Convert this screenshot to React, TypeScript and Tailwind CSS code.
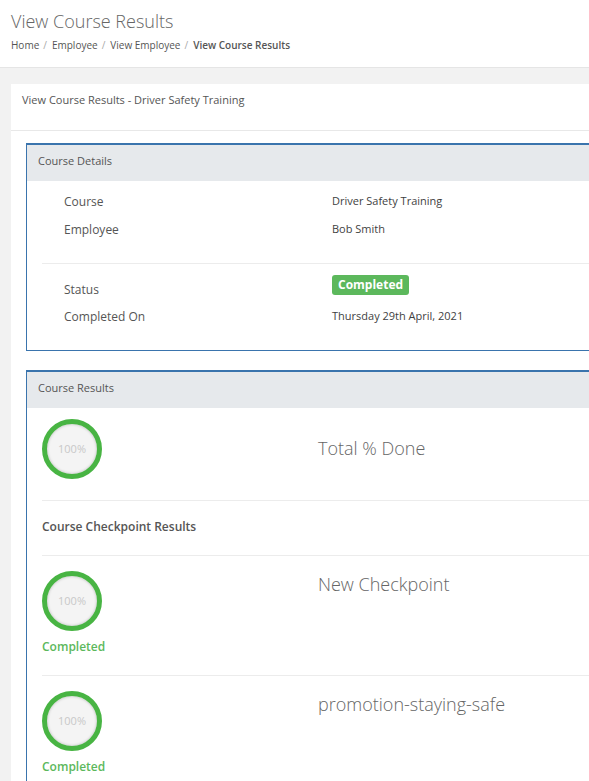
const font = { fontFamily: '"Open Sans", "Noto Sans", Arial, sans-serif' };

function Ring() {
  return (
    <div className="flex h-[60px] w-[60px] items-center justify-center rounded-full border-[5px] border-[#48b443] bg-[#f4f4f4] shadow-[inset_0_0_3px_rgba(0,0,0,0.25)]">
      <span className="text-[11px] text-[#c8c8c8]">100%</span>
    </div>
  );
}

function PanelHeader({ title }: { title: string }) {
  return (
    <div className="h-[36px] bg-[#e6e9ec] pl-[11px] pt-[8px] text-[11px] leading-[16px] text-[#555]">
      {title}
    </div>
  );
}

function DetailRow({ label, children }: { label: string; children: React.ReactNode }) {
  return (
    <div className="flex h-[28px] items-center">
      <div className="w-[290px] pl-[22px] text-[12px] text-[#555]">{label}</div>
      <div className="-mt-[2px] text-[11px] font-medium text-[#3f3f3f]">{children}</div>
    </div>
  );
}

function Checkpoint({ name }: { name: string }) {
  return (
    <div className="flex h-[120px] border-t border-[#ececec] pt-[15px]">
      <div className="w-[276px]">
        <Ring />
        <div className="mt-[7px] text-[12px] leading-[18px] font-semibold text-[#5cb85c]">Completed</div>
      </div>
      <div className="pt-[1px] text-[18px] font-light leading-[25px] text-[#666]">{name}</div>
    </div>
  );
}

export default function App() {
  return (
    <div className="h-[781px] w-[589px] overflow-hidden bg-[#f2f2f2]" style={font}>
      <div className="h-[68px] border-b border-[#e5e5e5] bg-white pl-[11px] pt-[8px]">
        <h1 className="text-[18px] font-light leading-[26px] text-[#666]">View Course Results</h1>
        <div className="mt-[4px] flex items-center text-[10px] text-[#555]">
          <span>Home</span>
          <span className="pl-[4px] pr-[5px] text-[#aaa]">/</span>
          <span>Employee</span>
          <span className="pl-[4px] pr-[5px] text-[#aaa]">/</span>
          <span>View Employee</span>
          <span className="pl-[4px] pr-[5px] text-[#aaa]">/</span>
          <span className="font-semibold">View Course Results</span>
        </div>
      </div>

      <div className="pl-[11px] pt-[16px]">
        <div className="w-[700px] bg-white">
          <div className="h-[47px] border-b border-[#e8e8e8] pl-[11px] pt-[8px] text-[11px] font-medium text-[#555]">
            View Course Results - Driver Safety Training
          </div>

          <div className="px-[15px] pt-[12px]">
            <div className="border-l border-b border-t-2 border-[#3a74ad]">
              <PanelHeader title="Course Details" />
              <div className="px-[15px] pt-[7px]">
                <DetailRow label="Course">Driver Safety Training</DetailRow>
                <DetailRow label="Employee">Bob Smith</DetailRow>
                <div className="mt-[19px] border-t border-[#ececec] pt-[11px]">
                  <div className="flex h-[28px] items-start">
                    <div className="w-[290px] pl-[22px] pt-[6px] text-[12px] text-[#555]">Status</div>
                    <span className="rounded-[3px] bg-[#5cb85c] px-[6px] py-[2px] text-[12px] font-bold leading-[16px] text-white">
                      Completed
                    </span>
                  </div>
                  <DetailRow label="Completed On">Thursday 29th April, 2021</DetailRow>
                </div>
                <div className="h-[19px]" />
              </div>
            </div>

            <div className="mt-[19px] border-l border-t-2 border-[#3a74ad]">
              <PanelHeader title="Course Results" />
              <div className="px-[15px] pt-[11px]">
                <div className="flex h-[81px]">
                  <div className="w-[276px]">
                    <Ring />
                  </div>
                  <div className="pt-[17px] text-[18px] font-light leading-[25px] text-[#666]">Total % Done</div>
                </div>
                <div className="h-[55px] border-t border-[#ececec] pt-[17px] text-[12px] leading-[18px] font-semibold text-[#555]">
                  Course Checkpoint Results
                </div>
                <Checkpoint name="New Checkpoint" />
                <Checkpoint name="promotion-staying-safe" />
              </div>
            </div>
          </div>
        </div>
      </div>
    </div>
  );
}
